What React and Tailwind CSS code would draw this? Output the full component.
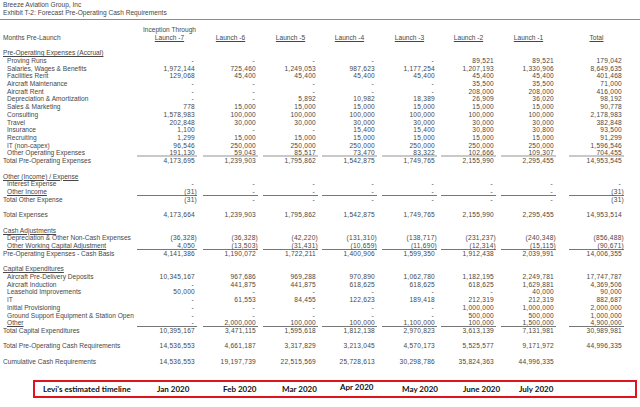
import React from 'react';
import clsx from 'clsx';

const D = '-';
const K = '15,000';

const rows = [
  { label: 'Pre-Operating Expenses (Accrual)', head: true },
  { label: 'Proving Runs', sub: true, v: [D, D, D, D, D, '89,521', '89,521', '179,042'] },
  { label: 'Salaries, Wages & Benefits', sub: true, v: ['1,972,144', '725,460', '1,249,053', '987,623', '1,177,254', '1,207,193', '1,330,906', '8,649,635'] },
  { label: 'Facilities Rent', sub: true, v: ['129,068', '45,400', '45,400', '45,400', '45,400', '45,400', '45,400', '401,468'] },
  { label: 'Aircraft Maintenance', sub: true, v: [D, D, D, D, D, '35,500', '35,500', '71,000'] },
  { label: 'Aircraft Rent', sub: true, v: [D, D, D, D, D, '208,000', '208,000', '416,000'] },
  { label: 'Depreciation & Amortization', sub: true, v: [D, D, '5,892', '10,982', '18,389', '26,909', '36,020', '98,192'] },
  { label: 'Sales & Marketing', sub: true, v: ['778', K, K, K, K, K, K, '90,778'] },
  { label: 'Consulting', sub: true, v: ['1,578,983', '100,000', '100,000', '100,000', '100,000', '100,000', '100,000', '2,178,983'] },
  { label: 'Travel', sub: true, v: ['202,848', '30,000', '30,000', '30,000', '30,000', '30,000', '30,000', '382,848'] },
  { label: 'Insurance', sub: true, v: ['1,100', D, D, '15,400', '15,400', '30,800', '30,800', '93,500'] },
  { label: 'Recruiting', sub: true, v: ['1,299', K, K, K, K, K, K, '91,299'] },
  { label: 'IT (non-capex)', sub: true, v: ['96,546', '250,000', '250,000', '250,000', '250,000', '250,000', '250,000', '1,596,546'] },
  { label: 'Other Operating Expenses', sub: true, line: 'gray', v: ['191,130', '59,043', '85,517', '73,470', '83,322', '102,666', '109,307', '704,455'] },
  { label: 'Total Pre-Operating Expenses', v: ['4,173,695', '1,239,903', '1,795,862', '1,542,875', '1,749,765', '2,155,990', '2,295,455', '14,953,545'] },
  { blank: true },
  { label: 'Other (Income) / Expense', head: true },
  { label: 'Interest Expense', sub: true, v: [D, D, D, D, D, D, D, D] },
  { label: 'Other Income', sub: true, u: true, line: 'dark', v: ['(31)', D, D, D, D, D, D, '(31)'] },
  { label: 'Total Other Expense', v: ['(31)', D, D, D, D, D, D, '(31)'] },
  { blank: true },
  { label: 'Total Expenses', v: ['4,173,664', '1,239,903', '1,795,862', '1,542,875', '1,749,765', '2,155,990', '2,295,455', '14,953,514'] },
  { blank: true },
  { label: 'Cash Adjustments', head: true },
  { label: 'Depreciation & Other Non-Cash Expenses', sub: true, v: ['(36,328)', '(36,328)', '(42,220)', '(131,310)', '(138,717)', '(231,237)', '(240,348)', '(856,488)'] },
  { label: 'Other Working Capital Adjustment', sub: true, u: true, line: 'dark', v: ['4,050', '(13,503)', '(31,431)', '(10,659)', '(11,690)', '(12,314)', '(15,115)', '(90,671)'] },
  { label: 'Pre-Operating Expenses - Cash Basis', v: ['4,141,386', '1,190,072', '1,722,211', '1,400,906', '1,599,350', '1,912,438', '2,039,991', '14,006,355'] },
  { blank: true },
  { label: 'Capital Expenditures', head: true },
  { label: 'Aircraft Pre-Delivery Deposits', sub: true, v: ['10,345,167', '967,686', '969,288', '970,890', '1,062,780', '1,182,195', '2,249,781', '17,747,787'] },
  { label: 'Aircraft Induction', sub: true, v: [D, '441,875', '441,875', '618,625', '618,625', '618,625', '1,629,881', '4,369,506'] },
  { label: 'Leasehold Improvements', sub: true, v: ['50,000', D, D, D, D, D, '40,000', '90,000'] },
  { label: 'IT', sub: true, v: [D, '61,553', '84,455', '122,623', '189,418', '212,319', '212,319', '882,687'] },
  { label: 'Initial Provisioning', sub: true, v: [D, D, D, D, D, '1,000,000', '1,000,000', '2,000,000'] },
  { label: 'Ground Support Equipment & Station Open', sub: true, v: [D, D, D, D, D, '500,000', '500,000', '1,000,000'] },
  { label: 'Other', sub: true, u: true, line: 'dark', v: [D, '2,000,000', '100,000', '100,000', '1,100,000', '100,000', '1,500,000', '4,900,000'] },
  { label: 'Total Capital Expenditures', v: ['10,395,167', '3,471,115', '1,595,618', '1,812,138', '2,970,823', '3,613,139', '7,131,981', '30,989,981'] },
  { blank: true },
  { label: 'Total Pre-Operating Cash Requirements', v: ['14,536,553', '4,661,187', '3,317,829', '3,213,045', '4,570,173', '5,525,577', '9,171,972', '44,996,335'] },
  { blank: true },
  { label: 'Cumulative Cash Requirements', v: ['14,536,553', '19,197,739', '22,515,569', '25,728,613', '30,298,786', '35,824,363', '44,996,335', ''] },
];

const heads = ['Launch -7', 'Launch -6', 'Launch -5', 'Launch -4', 'Launch -3', 'Launch -2', 'Launch -1', 'Total'];

const months = [
  ['Jan 2020', 'w-[66px]'],
  ['Feb 2020', 'w-[59px]'],
  ['Mar 2020', 'w-[58px]'],
  ['Apr 2020', 'w-[62px] -translate-y-[2px]'],
  ['May 2020', 'w-[61px]'],
  ['June 2020', 'w-[56px]'],
  ['July 2020', 'w-[60px]'],
];

const grid = 'grid grid-cols-[137px_60px_61px_60px_59px_60px_59px_60px_68px] h-[7.725px] leading-[7.725px]';

function Cell({ v, line, first }) {
  const neg = v.startsWith('(');
  return (
    <div className="flex justify-end">
      <div
        className={clsx(
          first ? 'w-[60px]' : 'w-[55px]',
          'h-[7.725px] text-right tracking-[0.25px]',
          neg ? 'pr-0' : v === D ? 'pr-[3px]' : 'pr-[2px]',
          line === 'gray' && 'border-b-2 border-[#c9c9c9]',
          line === 'dark' && 'border-b border-[#777]'
        )}
      >
        {v}
      </div>
    </div>
  );
}

function Row({ r }) {
  if (r.blank) return <div className="h-[7.725px]" />;
  return (
    <div className={grid}>
      <div className={clsx('whitespace-nowrap', r.sub ? 'pl-[7px]' : 'pl-[3px]', (r.head || r.u) && 'underline underline-offset-1')}>
        {r.label}
      </div>
      {r.v && r.v.map((v, i) => <Cell key={i} v={v} line={r.line} first={i === 0} />)}
    </div>
  );
}

export default function App() {
  return (
    <div className="w-[640px] h-[407px] overflow-hidden bg-white text-[#474747] text-[6.6px] font-['Liberation_Sans',Arial,sans-serif] pt-[1px]">
      <div className="h-[7.725px] leading-[7.725px] pl-[3px]">Breeze Aviation Group, Inc</div>
      <div className="h-[7.725px] leading-[7.725px] pl-[3px]">Exhibit T-2: Forecast Pre-Operating Cash Requirements</div>
      <div className="mt-[2.5px] mb-[5.5px] h-[1.5px] bg-[#8c8c8c]" />

      <div className={grid}>
        <div />
        <div className="flex justify-end">
          <div className="w-[62px] pl-[5px] text-center whitespace-nowrap">Inception Through</div>
        </div>
      </div>
      <div className={grid}>
        <div className="pl-[3px]">Months Pre-Launch</div>
        {heads.map((h, i) => (
          <div key={h} className="flex justify-end">
            <div className={clsx(i === 0 ? 'w-[60px] pl-[5px]' : 'w-[55px]', 'text-center')}>
              <span className="underline underline-offset-1">{h}</span>
            </div>
          </div>
        ))}
      </div>
      <div className="h-[7.725px]" />

      {rows.map((r, i) => (
        <Row key={i} r={r} />
      ))}

      <div className="mt-[14px] ml-[33px] w-[604px] h-[18px] border-2 border-[#e2141b] flex items-center font-['Lato',sans-serif] font-bold text-[8px] text-[#111]">
        <div className="w-[122px] pl-[8px]">Levi's estimated timeline</div>
        {months.map(([m, w]) => (
          <div key={m} className={w}>
            {m}
          </div>
        ))}
      </div>
    </div>
  );
}
